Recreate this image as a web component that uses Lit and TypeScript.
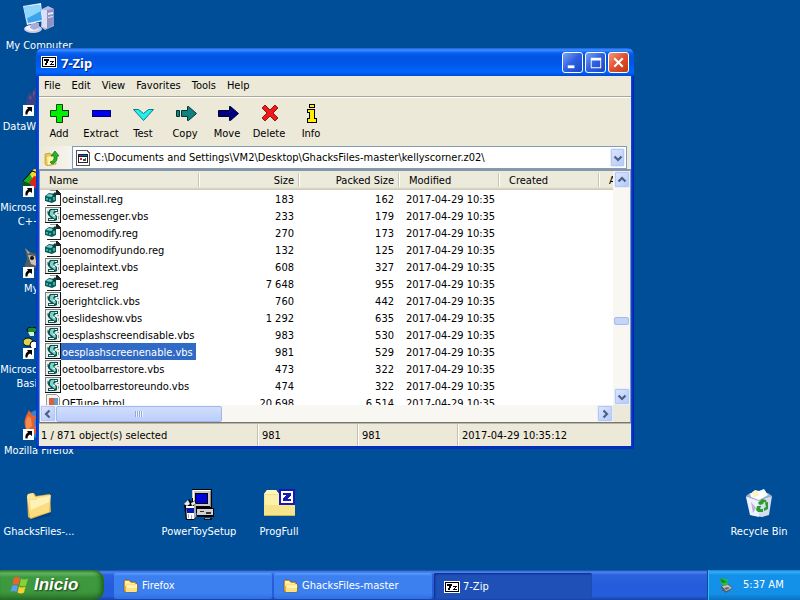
import { LitElement, html, svg, css, nothing } from "lit";
import { customElement, property } from "lit/decorators.js";

const shortcutArrow = svg`
  <rect x="0" y="21" width="11" height="11" fill="#fff"/>
  <path d="M4 23h5v5l-2-1.500c-2 1-2.500 2-2.500 4h-2c-.5-3 .5-5 2.500-6z" fill="#000"/>`;

const sevenZip = svg`
  <g shape-rendering="crispEdges">
    <rect width="16" height="12" fill="#fff"/>
    <rect x="1" y="1" width="14" height="10" fill="#000"/>
    <rect x="2" y="2" width="12" height="8" fill="#fff"/>
    <path d="M3 3h5v2H7v2H6v2H4V7h1V5H3z" fill="#000"/>
    <path d="M9 5h4v1h-1v1h-1v1h2v1H9V8h1V7h1V6H9z" fill="#000"/>
  </g>`;

const folderSmall = svg`
  <path d="M1 3l1-1h4l2 2h5v3h2l-1 7H2l-1-1z" fill="#e8b040" stroke="#6a4a10" stroke-width=".5"/>
  <path d="M2 3h4l2 2h4v3H2z" fill="#fff0a8"/>
  <path d="M3 6h11v7l-1 1H3z" fill="#ffe07c"/>
  <path d="M4 7h10v3H4z" fill="#fff4b8"/>`;

const art: Record<string, [string, unknown]> = {
  computer: ["0 0 32 32", svg`
    <path d="M19 6l6-3 6 3v17l-9 4-4-3z" fill="#b9bce0"/>
    <path d="M24 7l7-1v16l-7 4z" fill="#8e93c6"/>
    <path d="M19 7l5 0v18l-5-1z" fill="#dcdff4"/>
    <path d="M25 10l5-1v2l-5 1zM25 14l5-1v1l-5 1z" fill="#e8eafc"/>
    <ellipse cx="10" cy="26" rx="9" ry="4" fill="#c9cbe4"/>
    <ellipse cx="9" cy="25" rx="7" ry="3" fill="#f0f1fa"/>
    <path d="M8 20h8v5l-5 2-4-2z" fill="#a9acd4"/>
    <path d="M0 3l18-3 2 18-16 4z" fill="#e4ecfa"/>
    <path d="M1 4l16-2 2 15-14 3z" fill="#3ba4ee"/>
    <path d="M1 4l16-2 1 6-15 8z" fill="#8ed6fb"/>`],
  dog: ["0 0 32 32", svg`
    <path d="M3 21l1-8 3-5 2 2 3-7 7 1 6 8v9z" fill="#3a4484"/>
    <path d="M6 12l3 1-2 3zM10 6l2 3-2 4z" fill="#655a90"/>${shortcutArrow}`],
  blocks: ["0 0 32 32", svg`
    <path d="M0 16l9-10 6 2-8 11z" fill="#18b020"/><path d="M0 16l7 3v2H0z" fill="#0a5c10"/>
    <path d="M7 9l4-5 10 1v8H9z" fill="#f5d72c"/><path d="M6 18l5-7 9 2v10H11z" fill="#d8281c"/>
    <path d="M0 16l9-10 6 2" stroke="#000" fill="none"/>${shortcutArrow}`],
  bird: ["0 0 32 32", svg`
    <path d="M2 2l5 4 7 2v14H1l3-9z" fill="#555c60"/><path d="M5 9l7 1 2 10-6-2z" fill="#c9c3b4"/>
    <circle cx="9" cy="12" r="2" fill="#111"/><path d="M2 2l5 5-2 1z" fill="#a0a4a8"/>${shortcutArrow}`],
  balls: ["0 0 32 32", svg`
    <ellipse cx="9" cy="3" rx="5" ry="3" fill="#188c30" stroke="#000"/>
    <path d="M5 5h6v4H7z" fill="#d8eee0"/>
    <ellipse cx="5" cy="15" rx="5" ry="4" fill="#d8d44c" stroke="#000"/>
    <circle cx="11" cy="18" r="4" fill="#fff" stroke="#000"/>${shortcutArrow}`],
  fox: ["0 0 32 32", svg`
    <circle cx="16" cy="16" r="14" fill="#2e86d8"/>
    <path d="M6 2l3 5 4 1-2 8 5 10h-9a15 15 0 0 1-4-18z" fill="#e8602c"/>
    <path d="M5 8l3 2 1 8-5 4q-3-7 1-14z" fill="#f58a4c"/>${shortcutArrow}`],
  folder: ["0 0 32 32", svg`
    <path d="M6 28l22-4-2 3-17 4z" fill="#00336c" opacity=".5"/>
    <path d="M4 7l1-2 6-1 2 3 14-2 1 18-20 7-3-2z" fill="#e0b048"/>
    <path d="M4 8l1-3 5-1 2 4 14-2v16L7 27z" fill="#fbe89c"/>
    <path d="M6 10l6 0 2-2 14-2-2 17-19 6z" fill="#fbdc80"/>
    <path d="M7 11l6 0 2-2 12-2-1 6-18 8z" fill="#fff2b8"/>`],
  setup: ["0 0 32 32", svg`
    <g shape-rendering="crispEdges">
      <path d="M9 0h20v19H9z" fill="#000"/><path d="M9 1h19v16H10z" fill="#c8c8c8"/>
      <path d="M10 1h17v1H11v15h-1z" fill="#fff"/>
      <path d="M27 2h1v16h-1z" fill="#888"/><path d="M12 4h13v11H12z" fill="#000"/><path d="M13 5h11v9H13z" fill="#0000d8"/>
      <path d="M13 19h18v9H14z" fill="#000"/><path d="M14 20h16v6H14z" fill="#d0d0d0"/>
      <path d="M17 22h4v1h-4zM23 23h5v2h-5z" fill="#333"/><path d="M21 29h8v2h-8z" fill="#111"/>
      <path d="M22 29h5v1h-5z" fill="#99a"/>
    </g>
    <path d="M1 16l5-6 3 3 4-2v18l-3 2H3z" fill="#000"/>
    <path d="M3 17h8v13H4z" fill="#fff"/><path d="M11 16l2-2v14l-2 2z" fill="#aaa"/>
    <path d="M1 15l4-4 2 4-3 2zM8 14l4-2v3l-3 2z" fill="#e8e8e8"/>
    <path d="M3 19h8v5H4z" fill="#0818a8"/><path d="M5 25h1v4H5zM8 26h1v4H8z" fill="#98a8d8"/>`],
  prog: ["0 0 32 32", svg`
    <path d="M1 5l3-4h9l3 4h16v22H1z" fill="#f6e48c"/>
    <path d="M1 5l3-4h9l3 4z" fill="#fff8c0"/><path d="M1 26h31v1H1z" fill="#c8b860"/>
    <path d="M2 6h14v10H2z" fill="#fbf1a8"/>
    <g shape-rendering="crispEdges"><rect x="16" y="0" width="16" height="16" fill="#1818b8"/><rect x="18" y="2" width="12" height="12" fill="#fff"/>
    <path d="M20 4h8v3l-4 3h4v2h-8v-3l4-3h-4z" fill="#1818b8"/></g>`],
  recycle: ["0 0 32 32", svg`
    <path d="M3 7l12 4 14-4-3 19-7 2-11-2z" fill="#d4deee"/>
    <path d="M3 7l4-3 18 0 4 3-13 5z" fill="#9db0d0"/>
    <path d="M7 5l5-4 4 1 5-2 4 6-9 5-8-3z" fill="#fff"/><path d="M9 3l6-1 1 5-6 1z" fill="#fdf4c0"/>
    <path d="M3 8l12 4 1 16-9-2z" fill="#eef2fb"/>
    <path d="M8 13l5 6-3 5z" fill="#b8b4dc"/>
    <g fill="#2c9c2c"><path d="M15 14l4-4 4 1 1 3-3-1-1 2-3 1z"/><path d="M22 14l3-1v7l-4 2 0-3 2-1z"/><path d="M14 17l4 0-1 3 3 0 0 3h-5l-2-2z"/></g>`],
  seven: ["0 0 16 12", sevenZip],
  folderSmall: ["0 0 16 16", folderSmall],
  add: ["0 0 24 24", svg`<path d="M9.500 2.500h6v6h6v6h-6v6h-6v-6h-6v-6h6z" fill="#00f000" stroke="#005000"/><path d="M15.500 3v5.500H21.500v6h-6V20.500" stroke="#222" fill="none"/>`],
  extract: ["0 0 24 24", svg`<rect x="3.500" y="8.500" width="18" height="6" fill="#0000f0" stroke="#000078"/>`],
  test: ["0 0 24 24", svg`<path d="M2.500 7.500h5l5 4 5-4h5L12.500 18.500z" fill="#20f0f0" stroke="#107878"/>`],
  copy: ["0 0 24 24", svg`<path d="M3.500 8.500h3v6h-3zM8.500 8.500h6v-4l1 0 8 7-8 7h-1v-4h-6z" fill="#108080" stroke="#033"/>`],
  move: ["0 0 24 24", svg`<path d="M3.500 8.500h11v-4l1 0 8 7-8 7h-1v-4h-11z" fill="#000080" stroke="#000030"/>`],
  del: ["0 0 24 24", svg`<path d="M5 6l3-3 5 5 5-5 3 3-5 5 5 5-3 3-5-5-5 5-3-3 5-5z" fill="#f01818" stroke="#700" stroke-width=".8"/>`],
  info: ["0 0 24 24", svg`<g shape-rendering="crispEdges"><path d="M10 2h6v4h-6zM8 7h8v9h2v5H8v-5h2v-5H8z" fill="#000"/><path d="M11 3h4v2h-4zM9 8h6v9h2v3H9v-3h2v-7H9z" fill="#ffee00"/></g>`],
  up: ["0 0 16 16", svg`
    <path d="M1 4l5-1 1 2 5-1v10l-9 2-2-2z" fill="#e8c858" stroke="#a88828" stroke-width=".6"/>
    <path d="M3 7l9-2 1 7-9 3z" fill="#fff4a8"/>
    <path d="M6 12q5-1 4-6H7l4-5 4 5h-2q1 6-5 8z" fill="#28b428" stroke="#087008" stroke-width=".7"/>`],
  archive: ["0 0 16 16", svg`
    <g shape-rendering="crispEdges"><path d="M1 0h11l3 3v13H1z" fill="#555"/><path d="M2 1h9l3 3v11H2z" fill="#fff"/>
    <path d="M3 4h10v9H3z" fill="#222"/><path d="M4 7h8v5H4z" fill="#fff"/><path d="M4 5h8v1H4z" fill="#2850c8"/>
    <path d="M5 8h2v2H5z" fill="#d82020"/><path d="M8 9h2v2H8z" fill="#2840b0"/><path d="M10 8h1v3h-1z" fill="#208020"/></g>`],
  reg: ["0 0 16 16", svg`
    <g shape-rendering="crispEdges"><path d="M5 0h7l4 4v12H2v-1h13V5h-4V1H5z" fill="#222"/><path d="M5 1h6v4h4v10H4z" fill="#fff"/>
    <path d="M5 0h6v1H5z" fill="#999"/></g>
    <path d="M0 6l4-3 7 1v7l-4 2-7-2z" fill="#0e5c5c"/><path d="M1 6l3-2 5 1-3 2z" fill="#6fd8c8"/>
    <path d="M1 8h2v2H1zM4 9h2v2H4zM8 7h2v3H8z" fill="#38b0a0"/><path d="M7 5l3-3 2 2-2 3z" fill="#123c40"/>`],
  vbs: ["0 0 16 16", svg`
    <g shape-rendering="crispEdges"><path d="M0 0h16v16H0z" fill="#111"/><path d="M0 0h15v15H0z" fill="#808080"/><path d="M1 1h14v14H1z" fill="#e8f0ee"/></g>
    <path d="M5 2h8v3h-2l-2 2 3 2v4l-2 1H3v-3h3l-3-3V5z" fill="#154e50"/>
    <path d="M6 3h4L8 6l3 4-1 2-5-4V5z" fill="#78d8c4"/><path d="M4 12h5v1H4zM10 3h2v1h-2zM8 8h2v1H8z" fill="#e8fff8"/>
    <path d="M2 4h1v3H2zM12 6h2v1h-2zM13 9h1v3h-1z" fill="#88a8a8"/>`],
  html: ["0 0 16 16", svg`
    <path d="M1.500.5h10l3 3v12h-13z" fill="#f4f4f4" stroke="#999"/>
    <path d="M4 4h9v9H4z" fill="#6c98c8"/><path d="M4 4h5v9H4z" fill="#d8603c"/>`],
  flag: ["0 0 20 20", svg`
    <path d="M4 3q3-2 6 0l-1.500 7q-3-2-6 0z" fill="#f0602c"/><path d="M11 3.500q3 2 7 0l-2 7q-3 2-6.500 0z" fill="#88d038"/>
    <path d="M2 11q3-2 6 0l-1.500 6q-3-2-6 0z" fill="#5c9cf4"/><path d="M9 11.500q3 2 6.500 0l-1.500 6q-3 2-6.500 0z" fill="#fcd028"/>`],
  tray: ["0 0 16 16", svg`
    <path d="M3 9l7-2 5 4-7 5-4-3z" fill="#555c68"/><path d="M4 9l6-1 4 3-6 3z" fill="#c4c8d0"/>
    <path d="M6 11l4-1 2 1-4 2z" fill="#666"/><path d="M2 1l9 2-2 2 1 3-5 0-2-2z" fill="#28c038"/><path d="M2 1l2 5 5-1z" fill="#108c20"/>`],
  min: ["0 0 20 20", svg`<path d="M5 13h7v3H5z" fill="#fff"/>`],
  max: ["0 0 20 20", svg`<path d="M5 5h11v11H5zM6 8v7h9V8z" fill="#fff" fill-rule="evenodd"/>`],
  close: ["0 0 20 20", svg`<path d="M5.500 5.500l9 9M14.500 5.500l-9 9" stroke="#fff" stroke-width="2.200"/>`],
  cUp: ["0 0 10 10", svg`<path d="M1.500 6.500L5 3l3.500 3.500" stroke="#4d6185" stroke-width="2.200" fill="none"/>`],
  cDown: ["0 0 10 10", svg`<path d="M1.500 3.500L5 7l3.500-3.500" stroke="#4d6185" stroke-width="2.200" fill="none"/>`],
  cLeft: ["0 0 10 10", svg`<path d="M6.500 1.500L3 5l3.500 3.500" stroke="#4d6185" stroke-width="2.200" fill="none"/>`],
  cRight: ["0 0 10 10", svg`<path d="M3.500 1.500L7 5 3.500 8.500" stroke="#4d6185" stroke-width="2.200" fill="none"/>`],
};

@customElement("xp-icon")
export class XpIcon extends LitElement {
  @property() name = "";
  static styles = css`
    :host { display: block; flex: none; }
    .art { display: block; width: 100%; height: 100%; }
  `;
  render() {
    const [box, body] = art[this.name];
    return html`<svg class="art" viewBox=${box} aria-hidden="true">${body}</svg>`;
  }
}

const leftIcons = [
  ["computer", "My Computer"],
  ["dog", "DataWorks Pro"],
  ["blocks", "Microsoft Visual C++ 6.0"],
  ["bird", "MyZip"],
  ["balls", "Microsoft Visual Basic 6.0"],
  ["fox", "Mozilla Firefox"],
];
const bottomIcons = [
  ["folder", "GhacksFiles-...", "c1"],
  ["setup", "PowerToySetup", "c3"],
  ["prog", "ProgFull", "c4"],
  ["recycle", "Recycle Bin", "last"],
];
const tools = [
  ["add", "Add"], ["extract", "Extract"], ["test", "Test"], ["copy", "Copy"],
  ["move", "Move"], ["del", "Delete"], ["info", "Info"],
];
const files = [
  ["oeinstall.reg", "183", "162"],
  ["oemessenger.vbs", "233", "179"],
  ["oenomodify.reg", "270", "173"],
  ["oenomodifyundo.reg", "132", "125"],
  ["oeplaintext.vbs", "608", "327"],
  ["oereset.reg", "7 648", "955"],
  ["oerightclick.vbs", "760", "442"],
  ["oeslideshow.vbs", "1 292", "635"],
  ["oesplashscreendisable.vbs", "983", "530"],
  ["oesplashscreenenable.vbs", "981", "529"],
  ["oetoolbarrestore.vbs", "473", "322"],
  ["oetoolbarrestoreundo.vbs", "474", "322"],
  ["OETune.html", "20 698", "6 514"],
];

@customElement("zip-window")
export class ZipWindow extends LitElement {
  static styles = css`
    :host {
      display: flex; flex-direction: column; box-sizing: border-box;
      padding: 0 3px 3px; border-radius: 7px 7px 0 0;
      background: linear-gradient(90deg, #0030c8, #0a50e8 3px, #0a50e8 calc(100% - 3px), #0018a8);
      box-shadow: inset 0 -3px #0430b8;
      color: #000;
    }
    button { font: inherit; color: inherit; margin: 0; padding: 0; border: 0; background: none; }
    .title {
      display: flex; align-items: center; gap: 4px; flex: none; height: 28px;
      margin: 0 -3px; padding: 0 5px; box-sizing: border-box; border-radius: 7px 7px 0 0;
      background: linear-gradient(#1c5ce0, #3c90ff 2px, #0860f0 5px, #0054e0 9px, #0058ea 16px, #0066ff 24px, #0048d0);
    }
    .title h1 { flex: 1; margin: 0; padding-top: 2px; font: bold 13px/16px "Noto Sans", sans-serif; color: #fff; text-shadow: 1px 1px #0a1f80; }
    .seven { width: 16px; height: 12px; }
    .ctl { display: flex; gap: 2px; }
    .cb {
      width: 21px; height: 21px; box-sizing: border-box; border: 1px solid #fff; border-radius: 3px;
      background: linear-gradient(135deg, #7ba2f4, #2c5fe0 50%, #1c48c4);
    }
    .cb.x { background: linear-gradient(135deg, #f09a80, #e0502c 50%, #c03810); }
    .cb xp-icon { width: 19px; height: 19px; }
    .menu { display: flex; flex: none; height: 20px; background: #ece9d8; border-bottom: 1px solid #aca899; }
    .menu button { padding: 0 6px 0 5px; line-height: 18px; }
    .tools { display: flex; flex: none; height: 49px; box-sizing: border-box; background: #ece9d8; border-top: 1px solid #fff; }
    .tools button { width: 42px; padding: 4px 2px 0 0; display: flex; flex-direction: column; align-items: center; gap: 1px; white-space: nowrap; }
    .tools xp-icon { width: 24px; height: 24px; }
    .tools span { line-height: 14px; }
    .addr { display: flex; flex: none; height: 23px; background: #ece9d8; }
    .upb { width: 33px; padding-left: 5px; background: linear-gradient(90deg, #ece9d8, #f6f5ee); }
    .i16 { width: 16px; height: 16px; }
    .combo {
      flex: 1; display: flex; align-items: center; gap: 3px; box-sizing: border-box; margin-right: 4px;
      border: 1px solid #7f9db9; background: #fff; padding: 0 1px 0 2px; min-width: 0;
    }
    .combo input { flex: 1; min-width: 0; border: 0; padding: 0; font: inherit; background: none; outline: 0; }
    .sb {
      display: flex; align-items: center; justify-content: center; flex: none; width: 16px; height: 17px;
      box-sizing: border-box; border: 1px solid #e8eefe; border-radius: 2px; outline: 1px solid #b4c8f0; outline-offset: -2px;
      background: linear-gradient(135deg, #dce6fe, #b4c8f8);
    }
    .sb xp-icon { width: 10px; height: 10px; }
    .combo .sb { width: 15px; height: 19px; }
    .list {
      flex: 1; min-height: 0; display: grid; grid-template: minmax(0, 1fr) 17px / minmax(0, 1fr) 17px;
      background: #fff; border: 1px solid #8a96a8; border-width: 2px 1px 1px; border-bottom-color: #77756c;
    }
    .view { overflow: hidden; }
    table { border-collapse: collapse; table-layout: fixed; width: 660px; }
    th, td { padding: 0 6px; font-weight: normal; text-align: left; white-space: nowrap; }
    th {
      height: 19px; padding: 0 6px 0 9px; box-sizing: border-box;
      background: linear-gradient(90deg, transparent calc(100% - 2px), #c7c5b2 calc(100% - 2px), #c7c5b2 calc(100% - 1px), #fff calc(100% - 1px)) no-repeat 0 2px / 100% 14px,
        linear-gradient(#ebeadb 16px, #dedccb 17px, #cbc7b8);
    }
    .num { text-align: right; }
    td { padding-top: 2px; line-height: 15px; }
    td.name { padding: 0 0 0 5px; }
    .file { display: flex; height: 17px; }
    .file span { padding: 2px 3px 0 1px; }
    .sel { background: #316ac5; color: #fff; }
    .wn { width: 160px; } .wc { width: 100px; }
    .vs { display: flex; flex-direction: column; background: #f8f7f2; align-items: center; }
    .vs .thumb { height: 8px; width: 15px; box-sizing: border-box; border-radius: 2px; border: 1px solid #a8bce8; background: #c4d4fa; }
    .above { flex: 132; } .below { flex: 65; }
    .hs { display: flex; align-items: center; background: #f8f7f2; }
    .hs .thumb {
      width: 166px; height: 16px; box-sizing: border-box; border-radius: 2px; border: 1px solid #a0b8ec;
      background: linear-gradient(#d0defe, #bccdfa); display: flex; align-items: center; justify-content: center;
    }
    .grip { width: 8px; height: 6px; background: repeating-linear-gradient(90deg, #90a8e0 0 1px, #eef4fe 1px 2px); }
    .rest { flex: 1; }
    .corner { background: #ece9d8; }
    .status { display: flex; flex: none; height: 23px; box-sizing: border-box; background: #ece9d8; border-top: 1px solid #b8b5a6; line-height: 24px; }
    .status span { width: 100px; box-sizing: border-box; padding-left: 3px; border-left: 1px solid #fff; box-shadow: -1px 0 #c4c1b0; }
    .status .first { width: 219px; padding-left: 2px; border: 0; box-shadow: none; }
    .status .grow { flex: 1; }
  `;
  render() {
    return html`
      <header class="title">
        <xp-icon class="seven" name="seven"></xp-icon>
        <h1>7-Zip</h1>
        <div class="ctl">
          <button class="cb" aria-label="Minimize"><xp-icon name="min"></xp-icon></button>
          <button class="cb" aria-label="Maximize"><xp-icon name="max"></xp-icon></button>
          <button class="cb x" aria-label="Close"><xp-icon name="close"></xp-icon></button>
        </div>
      </header>
      <nav class="menu">
        ${["File", "Edit", "View", "Favorites", "Tools", "Help"].map((m) => html`<button>${m}</button>`)}
      </nav>
      <div class="tools">
        ${tools.map(([i, t]) => html`<button><xp-icon name=${i}></xp-icon><span>${t}</span></button>`)}
      </div>
      <div class="addr">
        <button class="upb" aria-label="Up One Level"><xp-icon class="i16" name="up"></xp-icon></button>
        <div class="combo">
          <xp-icon class="i16" name="archive"></xp-icon>
          <input aria-label="Path" .value=${"C:\\Documents and Settings\\VM2\\Desktop\\GhacksFiles-master\\kellyscorner.z02\\"}>
          <button class="sb" aria-label="Show paths"><xp-icon name="cDown"></xp-icon></button>
        </div>
      </div>
      <div class="list">
        <div class="view">
          <table>
            <colgroup><col class="wn"><col class="wc"><col class="wc"><col class="wc"><col class="wc"><col class="wc"></colgroup>
            <thead><tr><th>Name</th><th class="num">Size</th><th class="num">Packed Size</th><th>Modified</th><th>Created</th><th>Accessed</th></tr></thead>
            <tbody>
              ${files.map(([n, s, p]) => html`<tr>
                <td class="name"><div class="file"><xp-icon class="i16" name=${n.split(".")[1]}></xp-icon><span class=${n === "oesplashscreenenable.vbs" ? "sel" : nothing}>${n}</span></div></td>
                <td class="num">${s}</td><td class="num">${p}</td><td>2017-04-29 10:35</td><td></td><td></td></tr>`)}
            </tbody>
          </table>
        </div>
        <div class="vs">
          <button class="sb" aria-label="Scroll up"><xp-icon name="cUp"></xp-icon></button>
          <div class="above"></div><div class="thumb"></div><div class="below"></div>
          <button class="sb" aria-label="Scroll down"><xp-icon name="cDown"></xp-icon></button>
        </div>
        <div class="hs">
          <button class="sb" aria-label="Scroll left"><xp-icon name="cLeft"></xp-icon></button>
          <div class="thumb"><div class="grip"></div></div><div class="rest"></div>
          <button class="sb" aria-label="Scroll right"><xp-icon name="cRight"></xp-icon></button>
        </div>
        <div class="corner"></div>
      </div>
      <footer class="status">
        <span class="first">1 / 871 object(s) selected</span><span>981</span><span>981</span><span class="grow">2017-04-29 10:35:12</span>
      </footer>`;
  }
}

@customElement("app-root")
export class AppRoot extends LitElement {
  static styles = css`
    :host {
      display: flex; flex-direction: column; position: relative; height: 100vh; overflow: hidden;
      background: #004e98; font: 11px/14px "DejaVu Sans Condensed", "DejaVu Sans", sans-serif; color: #fff;
    }
    .desk { flex: 1; min-height: 0; display: grid; align-content: start; padding-top: 3px;
      grid-template-columns: repeat(4, 80px) minmax(0, 1fr) 80px; grid-auto-rows: 81px; }
    .icon { display: flex; flex-direction: column; align-items: center; gap: 4px; margin-right: 2px; text-align: center; color: #fff; text-decoration: none; white-space: nowrap; }
    .icon xp-icon { width: 32px; height: 32px; }
    .icon .wrap { white-space: normal; width: 92px; }
    .side { grid-column: 1; }
    .c1 { grid-column: 1; grid-row: 7; }
    .c3 { grid-column: 3; grid-row: 7; }
    .c4 { grid-column: 4; grid-row: 7; }
    .last { grid-column: 6; grid-row: 7; }
    zip-window { position: absolute; left: 36px; right: 166px; top: 48px; bottom: 151px; }
    .bar {
      flex: none; display: flex; height: 30px; box-sizing: border-box;
      background: linear-gradient(#1f3fae, #4888f0 2px, #2a62dc 5px, #245cdc 15px, #245edb 26px, #1941a5);
    }
    button { font: inherit; color: inherit; margin: 0; border: 0; }
    .start {
      width: 104px; margin-right: 9px; padding: 0 0 0 10px; display: flex; align-items: center; gap: 4px;
      border-radius: 0 10px 10px 0; background: linear-gradient(#388438, #66b866 3px, #3f9a3f 7px, #3c983c 22px, #2a702a);
      box-shadow: inset -3px 0 4px #1e641e;
      font: italic bold 17px/20px "Liberation Sans", sans-serif; text-shadow: 1px 1px 2px #163c16;
    }
    .flag { width: 20px; height: 20px; }
    .task {
      flex: 0 1 158px; margin: 3px 1px 1px; min-width: 0; display: flex; align-items: center; gap: 3px; padding: 0 8px 0 9px; border-radius: 2px;
      background: linear-gradient(#5c9cfa, #3c80f0 3px, #3c80f0 20px, #3070e0); text-align: left;
    }
    .task.on { background: #1e50b8; box-shadow: inset 1px 1px 2px #0c2c80; padding: 2px 8px 0 10px; }
    .task xp-icon { width: 16px; height: 16px; }
    .task .seven { height: 12px; }
    .fill { flex: 1; }
    .tray {
      width: 93px; box-sizing: border-box; display: flex; align-items: center; gap: 9px; padding-left: 10px; border-left: 1px solid #0c4a9c;
      background: linear-gradient(#1580d8, #30b0f4 2px, #1490e8 5px, #1290e8 24px, #0c70c0);
      box-shadow: inset 1px 0 #38b8f8; white-space: nowrap;
    }
    .tray xp-icon { width: 16px; height: 16px; }
  `;
  render() {
    return html`
      <main class="desk">
        ${leftIcons.map(([i, t]) => html`<a class="icon side" href="#"><xp-icon name=${i}></xp-icon><span class=${t.includes("Visual") ? "wrap" : nothing}>${t}</span></a>`)}
        ${bottomIcons.map(([i, t, c]) => html`<a class="icon ${c}" href="#"><xp-icon name=${i}></xp-icon><span>${t}</span></a>`)}
      </main>
      <zip-window></zip-window>
      <footer class="bar">
        <button class="start"><xp-icon class="flag" name="flag"></xp-icon>Inicio</button>
        <button class="task"><xp-icon name="folderSmall"></xp-icon>Firefox</button>
        <button class="task"><xp-icon name="folderSmall"></xp-icon>GhacksFiles-master</button>
        <button class="task on"><xp-icon class="seven" name="seven"></xp-icon>7-Zip</button>
        <div class="fill"></div>
        <div class="tray"><xp-icon name="tray"></xp-icon><time>5:37 AM</time></div>
      </footer>`;
  }
}
